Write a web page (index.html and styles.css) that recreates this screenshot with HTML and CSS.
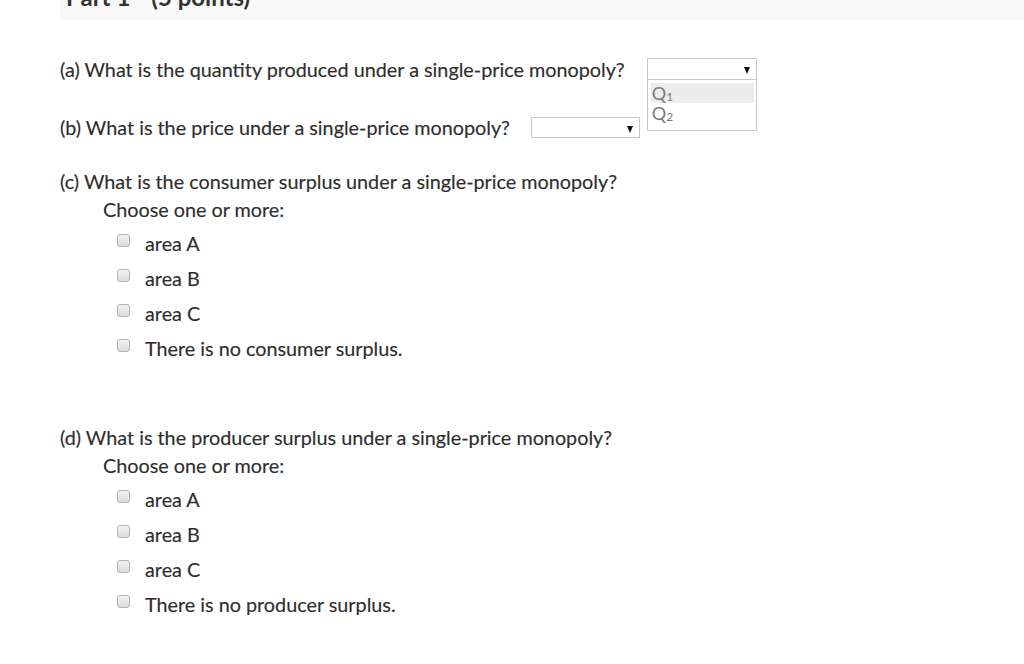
FILE: index.html
```html
<!DOCTYPE html>
<html lang="en">
<head>
<meta charset="utf-8">
<title>Part 1</title>
<link rel="stylesheet" href="styles.css">
</head>
<body>
<div class="page">
  <div class="part-header">
    <h3 class="part-title"><span>Part 1</span><span class="points">(5 points)</span></h3>
  </div>

  <div class="q-row q-a">
    <span class="q-text">(a) What is the quantity produced under a single-price monopoly?</span>
    <div class="select-wrap">
      <div class="select"><span class="arrow"></span></div>
      <ul class="dropdown">
        <li class="opt active">Q<sub>1</sub></li>
        <li class="opt">Q<sub>2</sub></li>
      </ul>
    </div>
  </div>

  <div class="q-row q-b">
    <span class="q-text">(b) What is the price under a single-price monopoly?</span>
    <div class="select-wrap">
      <div class="select"><span class="arrow"></span></div>
    </div>
  </div>

  <div class="q-block q-c">
    <p class="q-text">(c) What is the consumer surplus under a single-price monopoly?</p>
    <p class="prompt">Choose one or more:</p>
    <ul class="choices">
      <li><span class="cb"></span><span class="label">area A</span></li>
      <li><span class="cb"></span><span class="label">area B</span></li>
      <li><span class="cb"></span><span class="label">area C</span></li>
      <li><span class="cb"></span><span class="label">There is no consumer surplus.</span></li>
    </ul>
  </div>

  <div class="q-block q-d">
    <p class="q-text">(d) What is the producer surplus under a single-price monopoly?</p>
    <p class="prompt">Choose one or more:</p>
    <ul class="choices">
      <li><span class="cb"></span><span class="label">area A</span></li>
      <li><span class="cb"></span><span class="label">area B</span></li>
      <li><span class="cb"></span><span class="label">area C</span></li>
      <li><span class="cb"></span><span class="label">There is no producer surplus.</span></li>
    </ul>
  </div>
</div>
</body>
</html>
```

FILE: styles.css
```css
html, body {
  margin: 0;
  padding: 0;
  background: #ffffff;
}
body {
  font-family: Lato, "Open Sans", "Liberation Sans", sans-serif;
  color: #2e2e2e;
  font-size: 19.8px;
  width: 1024px;
  height: 664px;
  overflow: hidden;
}
.page {
  padding-left: 60px;
}
.part-header {
  height: 20px;
  background: #f8f8f8;
  overflow: hidden;
  padding-left: 6px;
}
.part-title {
  margin: -19px 0 0 0;
  font-size: 24px;
  line-height: 32px;
  font-weight: 700;
  color: #333333;
  display: flex;
  gap: 21px;
}
.q-row {
  display: flex;
  align-items: center;
  height: 22px;
}
.q-a {
  margin-top: 38px;
  gap: 22px;
}
.q-b {
  margin-top: 36px;
  gap: 21px;
}
.q-text {
  margin: 0;
  line-height: 28px;
  -webkit-text-stroke: 0.15px #2e2e2e;
}
.select-wrap {
  position: relative;
}
.select {
  box-sizing: border-box;
  width: 110px;
  height: 22px;
  border: 1px solid #c8c8c8;
  background: #ffffff;
  position: relative;
}
.q-b .select {
  width: 109px;
  height: 21px;
}
.arrow {
  position: absolute;
  right: 6px;
  top: 8px;
  width: 0;
  height: 0;
  border-left: 3.5px solid transparent;
  border-right: 3.5px solid transparent;
  border-top: 7px solid #111111;
}
.dropdown {
  position: absolute;
  left: 0;
  top: 22px;
  box-sizing: border-box;
  width: 110px;
  margin: 0;
  padding: 3px 2px 7px 3px;
  list-style: none;
  border: 1px solid #c8c8c8;
  border-top: none;
  background: #ffffff;
  z-index: 2;
}
.opt {
  height: 20px;
  line-height: 20px;
  font-size: 18px;
  color: #7a7a7a;
  padding-left: 1px;
  overflow: hidden;
}
.opt.active {
  background: #ececec;
}
.opt sub {
  font-size: 12px;
  vertical-align: -1px;
  line-height: 0;
}
.q-c {
  margin-top: 29px;
}
.q-d {
  margin-top: 58px;
}
.prompt {
  margin: 0;
  padding-left: 43px;
  line-height: 28px;
  -webkit-text-stroke: 0.15px #2e2e2e;
}
.choices {
  list-style: none;
  margin: 2px 0 0 0;
  padding: 0 0 0 57px;
}
.choices li {
  display: flex;
  align-items: center;
  height: 35px;
}
.cb {
  box-sizing: border-box;
  width: 13px;
  height: 13px;
  border: 1px solid #b4b4b4;
  border-radius: 3px;
  background: linear-gradient(#f2f2f2, #dcdcdc);
  margin-top: -4px;
}
.label {
  margin-left: 15px;
  line-height: 28px;
  -webkit-text-stroke: 0.15px #2e2e2e;
}
```
